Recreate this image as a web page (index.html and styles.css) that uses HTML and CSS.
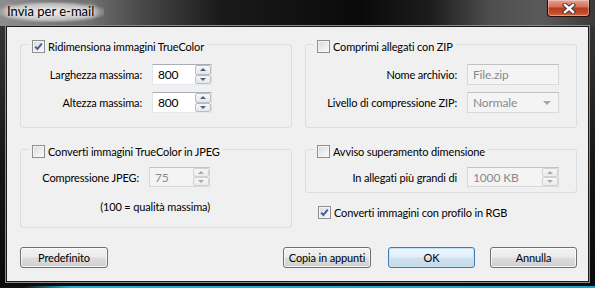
FILE: index.html
```html
<!DOCTYPE html>
<html>
<head>
<meta charset="utf-8">
<title>Invia per e-mail</title>
<link rel="stylesheet" href="styles.css">
</head>
<body>
<div class="window">
  <div class="titlebar">
    <span class="title">Invia per e-mail</span>
    <div class="close">
      <svg width="14" height="11" viewBox="0 0 14 11">
        <path d="M3 2 L11 9 M11 2 L3 9" stroke="#3b3b3b" stroke-width="4.4" stroke-linecap="square"/>
        <path d="M3 2 L11 9 M11 2 L3 9" stroke="#ffffff" stroke-width="2.4" stroke-linecap="square"/>
      </svg>
    </div>
  </div>
  <div class="client">
    <div class="groups">
      <fieldset class="group g1">
        <legend><span class="chk"><span class="cb checked"><svg width="11" height="11" viewBox="0 0 11 11"><path d="M2.2 5.6 L4.4 8 L8.8 2.6" fill="none" stroke="#4a5f97" stroke-width="2"/></svg></span>Ridimensiona immagini TrueColor</span></legend>
        <div class="rows">
          <span class="lbl">Larghezza massima:</span>
          <div class="spin w60"><span class="val">800</span><span class="arrows"><span class="ab"><i class="up"></i></span><span class="ab"><i class="dn"></i></span></span></div>
          <span class="lbl">Altezza massima:</span>
          <div class="spin w60"><span class="val">800</span><span class="arrows"><span class="ab"><i class="up"></i></span><span class="ab"><i class="dn"></i></span></span></div>
        </div>
      </fieldset>

      <fieldset class="group g2">
        <legend><span class="chk"><span class="cb"></span>Comprimi allegati con ZIP</span></legend>
        <div class="rows">
          <span class="lbl">Nome archivio:</span>
          <div class="edit disabled w92"><span class="val">File.zip</span></div>
          <span class="lbl">Livello di compressione ZIP:</span>
          <div class="combo disabled w92"><span class="val">Normale</span><i class="drop"></i></div>
        </div>
      </fieldset>

      <fieldset class="group g3">
        <legend><span class="chk"><span class="cb"></span>Converti immagini TrueColor in JPEG</span></legend>
        <div class="rows">
          <span class="lbl">Compressione JPEG:</span>
          <div class="spin disabled w61"><span class="val">75</span><span class="arrows"><span class="ab"><i class="up"></i></span><span class="ab"><i class="dn"></i></span></span></div>
          <span class="note">(100 = qualità massima)</span>
        </div>
      </fieldset>

      <div class="rcol">
        <fieldset class="group g4">
          <legend><span class="chk"><span class="cb"></span>Avviso superamento dimensione</span></legend>
          <div class="rows">
            <span class="lbl">In allegati più grandi di</span>
            <div class="spin disabled w92"><span class="val">1000 KB</span><span class="arrows"><span class="ab"><i class="up"></i></span><span class="ab"><i class="dn"></i></span></span></div>
          </div>
        </fieldset>
        <span class="chk rgb"><span class="cb checked"><svg width="11" height="11" viewBox="0 0 11 11"><path d="M2.2 5.6 L4.4 8 L8.8 2.6" fill="none" stroke="#4a5f97" stroke-width="2"/></svg></span>Converti immagini con profilo in RGB</span>
      </div>
    </div>

    <div class="buttons">
      <button class="btn b88">Predefinito</button>
      <button class="btn b88 push">Copia in appunti</button>
      <button class="btn b87 default ok">OK</button>
      <button class="btn b87 cancel">Annulla</button>
    </div>
  </div>
</div>
</body>
</html>
```

FILE: styles.css
```css
* { box-sizing: border-box; }
html, body { margin: 0; padding: 0; }
body {
  width: 595px;
  height: 288px;
  overflow: hidden;
  background: #000;
  font-family: Lato, "Liberation Sans", sans-serif;
  font-size: 11px;
  letter-spacing: -0.15px;
  color: #000;
}

.window {
  width: 595px;
  height: 288px;
  display: flex;
  flex-direction: column;
  background:
    linear-gradient(to right, #101010 0, #101010 22px, #2aaed4 70px, #1fa0cc 100%) bottom / 100% 2px no-repeat,
    linear-gradient(to right, #8c8c8c 0, #707070 90px, #4a4a4a 140px, #1a1a1a 220px, #0a0a0a 360px, #1c1c1c 430px, #4e4e4e 490px, #5a5a5a 540px, #3a3a3a 595px) top / 100% 26px no-repeat,
    linear-gradient(#3a3a3a, #141414 60%, #0a0a0a);
}

.titlebar {
  height: 26px;
  flex: none;
  display: flex;
  justify-content: space-between;
  align-items: flex-start;
}

.title {
  margin-top: 2px;
  padding: 2px 10px 3px 7px;
  font-size: 13px;
  letter-spacing: 0;
  line-height: 15px;
  color: #000;
  background: radial-gradient(ellipse at center, rgba(255,255,255,0.8) 0, rgba(255,255,255,0.5) 55%, rgba(255,255,255,0) 78%);
  text-shadow: 0 0 4px #fff, 0 0 7px #fff;
}

.close {
  width: 43px;
  height: 17px;
  margin-right: 5px;
  border: 1px solid #2a0d08;
  border-top: none;
  border-radius: 0 0 4px 4px;
  background: linear-gradient(#e6a08e 0, #d6755f 40%, #b83c20 52%, #c34a2a 80%, #d66a44 100%);
  box-shadow: inset 0 0 0 1px rgba(255,255,255,0.35);
  display: flex;
  align-items: center;
  justify-content: center;
}

.client {
  flex: 1;
  margin: 0 6px 6px 6px;
  border: 1px solid #1a1a1a;
  box-shadow: 0 0 0 1px #8a8a8a;
  background: #f0f0f0;
  display: flex;
  flex-direction: column;
  padding: 8px 11px 13px 13px;
}

.groups {
  display: grid;
  grid-template-columns: 272px 272px;
  column-gap: 13px;
  row-gap: 12px;
  align-items: start;
}

.group {
  margin: 0;
  min-width: 0;
  border: 1px solid #d5dfe5;
  border-radius: 3px;
}

.group legend {
  margin-left: 8px;
  padding: 5px 3px 0 3px;
}

.chk {
  display: flex;
  align-items: center;
  height: 13px;
  line-height: 13px;
  white-space: nowrap;
  gap: 3px;
}

.cb {
  width: 13px;
  height: 13px;
  flex: none;
  border: 1px solid #8f8f8f;
  background: linear-gradient(135deg, #d6d9de 0, #f2f2f2 70%, #fafafa 100%);
  box-shadow: inset 0 0 0 1px #f4f4f4;
  display: flex;
  align-items: center;
  justify-content: center;
}

.rows {
  display: grid;
  grid-template-columns: 1fr auto;
  column-gap: 10px;
  row-gap: 7px;
  align-items: center;
}

.lbl {
  justify-self: end;
  white-space: nowrap;
}

.note {
  grid-column: 1 / 3;
  justify-self: end;
  margin-top: 5px;
  line-height: 15px;
}

.g1 { padding: 11px 79px 14px 0; }
.g2 { padding: 11px 17px 14px 0; }
.g3 { padding: 9px 81px 13px 0; }
.g4 { padding: 9px 17px 5px 0; }

.rcol {
  display: flex;
  flex-direction: column;
}

.rgb {
  margin-top: 13px;
  padding-left: 13px;
}

.w60 { width: 60px; }
.w61 { width: 61px; }
.w92 { width: 92px; }

.spin, .edit, .combo {
  height: 21px;
  display: flex;
  align-items: center;
  border: 1px solid;
  border-color: #abadb3 #dbdfe6 #e3e9ef #e2e3ea;
  background: #fff;
}

.g3 .spin, .g4 .spin { height: 20px; }

.val {
  flex: 1;
  padding-left: 5px;
  white-space: nowrap;
  font-size: 12px;
}

.disabled {
  background: #f4f4f4;
  border-color: #c2c2c2 #d6d6d6 #d9d9d9 #d6d6d6;
  color: #8a8a8a;
}

.arrows {
  width: 16px;
  align-self: stretch;
  display: flex;
  flex-direction: column;
}

.ab {
  flex: 1;
  border: 1px solid #b7bdc4;
  border-radius: 2px;
  background: linear-gradient(#f7f7f7, #e4e6e8);
  display: flex;
  align-items: center;
  justify-content: center;
}

.ab .up, .ab .dn {
  width: 0;
  height: 0;
  border-left: 3px solid transparent;
  border-right: 3px solid transparent;
}
.ab .up { border-bottom: 3px solid #4d6080; }
.ab .dn { border-top: 3px solid #4d6080; }

.disabled .ab { border-color: #d2d2d2; background: linear-gradient(#f6f6f6, #ececec); }
.disabled .ab .up { border-bottom-color: #a8a8a8; }
.disabled .ab .dn { border-top-color: #a8a8a8; }

.combo .drop {
  width: 0;
  height: 0;
  margin-right: 7px;
  border-left: 4px solid transparent;
  border-right: 4px solid transparent;
  border-top: 4px solid #a6a6a6;
}

.buttons {
  margin-top: auto;
  display: flex;
}

.btn {
  height: 21px;
  padding: 0;
  font: inherit;
  letter-spacing: inherit;
  color: #000;
  border: 1px solid #707070;
  border-radius: 3px;
  background: linear-gradient(#f2f2f2 0, #ebebeb 48%, #dddddd 52%, #cfcfcf 100%);
  box-shadow: inset 0 0 0 1px rgba(255,255,255,0.75);
  white-space: nowrap;
}

.b88 { width: 88px; }
.b87 { width: 87px; }
.push { margin-left: auto; }
.ok { margin-left: 17px; }
.cancel { margin-left: 15px; }

.btn.default {
  border-color: #3c7fb1;
  box-shadow: inset 0 0 0 1px #bfe4f7;
  background: linear-gradient(#eaf6fd 0, #e3eff7 48%, #d1e2ee 52%, #c6d8e6 100%);
}
```
